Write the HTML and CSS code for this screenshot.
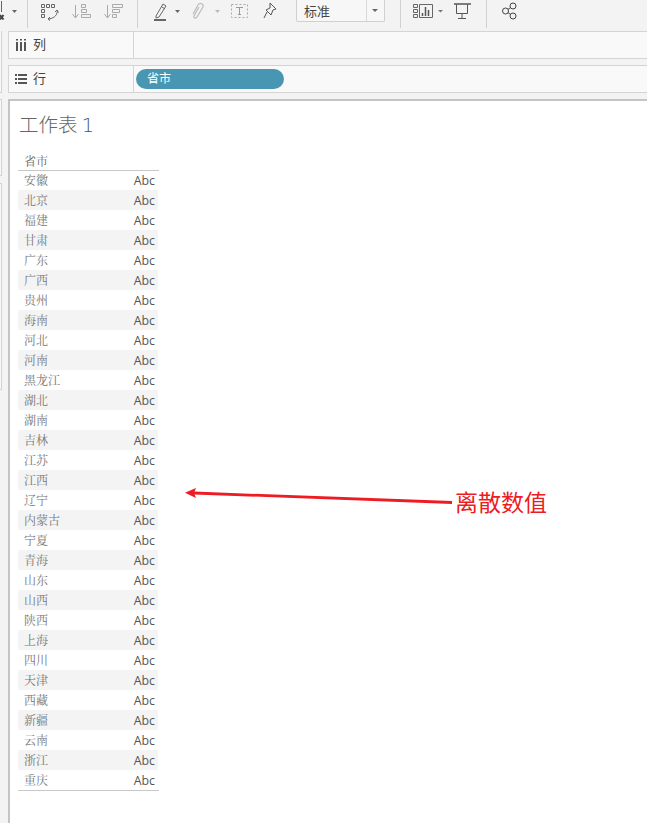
FILE: index.html
```html
<!DOCTYPE html>
<html lang="zh">
<head>
<meta charset="utf-8">
<title>工作表 1</title>
<link rel="stylesheet" href="styles.css">
</head>
<body>
<div class="toolbar">
  <svg class="tools" width="647" height="31" viewBox="0 0 647 31" fill="none">
    <g stroke="#444"><path d="M0 15l3.500 4.500M0 19.500L3.500 15" stroke-width="2"/><path d="M1.500 1v11" stroke-width="1" stroke="#666"/></g>
    <path d="M12 10h5l-2.500 3z" fill="#666"/>
    <path d="M27.500 0v28M137.500 0v28M400.500 0v28M486.500 0v28" stroke="#d0d0d0"/>
    <g stroke="#666"><path d="M41.500 4.500h3v3h-3zM46.500 4.500h3v3h-3zM51.500 4.500h3v3h-3zM41.500 9.500h3v3h-3zM41.500 14.500h3v3h-3z"/><path d="M57 10c1 4-2 8-8 9"/><path d="M55 12l2-2 1.500 2.500M50 17l-2 2 2 1.500"/></g>
    <g stroke="#aaa"><path d="M75.500 5v12M72.500 14l3 4 3-4"/><path d="M81.500 4.500h4v3h-4zM81.500 9.500h5v3h-5zM81.500 14.500h9v3h-9z"/></g>
    <g stroke="#aaa"><path d="M107.500 5v12M104.500 14l3 4 3-4"/><path d="M112.500 4.500h10v3h-10zM112.500 9.500h7v3h-7zM112.500 14.500h4v3h-4z"/></g>
    <path d="M156 16l7-12 3 2-7 11-3 1zM162 7l3 2" stroke="#666"/><path d="M154 20h12" stroke="#666" stroke-width="2"/>
    <path d="M175 10h5l-2.500 3z" fill="#666"/>
    <path d="M193 14l5-9c2-3 6-1 5 2l-6 10c-1 2-4 1-3-1l5-9" stroke="#bbb" stroke-width="1.200"/>
    <path d="M215 10h5l-2.500 3z" fill="#bbb"/>
    <path d="M231.500 4.500h16v13h-16z" stroke="#aaa" stroke-dasharray="2 2"/><path d="M236 7.500h7M239.500 7.500v7M238 14.500h3" stroke="#999"/>
    <path d="M270 3l6 6-3 1-2 5-5-5 4-2zM267 12l-3 6" stroke="#555"/>
    <path d="M372 10h6l-3 3z" fill="#666"/>
    <path d="M413.500 4.500h4v3h-4zM413.500 9.500h4v3h-4zM413.500 14.500h4v3h-4zM419.500 4.500h13v13h-13z" stroke="#666"/>
    <path d="M422.500 16v-3M425.500 16V7M428.500 16v-6" stroke="#555" stroke-width="1.500"/>
    <path d="M438 10h5l-2.500 2.500z" fill="#777"/>
    <path d="M456.500 4.500v9h11v-9M462 13.500v5M458 18.500h8" stroke="#555"/><path d="M454 4h17" stroke="#555" stroke-width="1.500"/>
    <circle cx="513" cy="6" r="3" stroke="#444"/><circle cx="505.500" cy="11" r="3" stroke="#444"/><circle cx="513" cy="16" r="3" stroke="#444"/><path d="M508 9.400l2.500-1.800M508 12.600l2.500 1.800" stroke="#444"/>
  </svg>
  <div class="select"><span class="select-text">标准</span><span class="select-arrow"></span></div>
</div>
<div class="main">
  <div class="rail">
    <div class="rail-panel rail-a"></div>
    <div class="rail-panel rail-b"></div>
    <div class="rail-panel rail-c"></div>
  </div>
  <div class="stack">
    <div class="shelf">
      <div class="shelf-label">
        <svg class="shelf-icon" width="12" height="12" viewBox="0 0 12 12"><path d="M1 3h2v9H1zM5 3h2v9H5zM9 3h2v9H9zM1 0h2v1.500H1zM5 0h2v1.500H5zM9 0h2v1.500H9z" fill="#555"/></svg>
        <span class="shelf-name">列</span>
      </div>
      <div class="shelf-body"></div>
    </div>
    <div class="shelf">
      <div class="shelf-label">
        <svg class="shelf-icon" width="12" height="12" viewBox="0 0 12 12"><path d="M0 1h2v2H0zM0 5h2v2H0zM0 9h2v2H0zM3 1h9v2H3zM3 5h9v2H3zM3 9h9v2H3z" fill="#555"/></svg>
        <span class="shelf-name">行</span>
      </div>
      <div class="shelf-body"><div class="pill">省市</div></div>
    </div>
    <div class="canvas">
      <h1 class="title">工作表 <span class="title-num">1</span></h1>
      <div class="table">
        <div class="head">省市</div>
        <div class="row"><span>安徽</span><span class="abc">Abc</span></div>
        <div class="row"><span>北京</span><span class="abc">Abc</span></div>
        <div class="row"><span>福建</span><span class="abc">Abc</span></div>
        <div class="row"><span>甘肃</span><span class="abc">Abc</span></div>
        <div class="row"><span>广东</span><span class="abc">Abc</span></div>
        <div class="row"><span>广西</span><span class="abc">Abc</span></div>
        <div class="row"><span>贵州</span><span class="abc">Abc</span></div>
        <div class="row"><span>海南</span><span class="abc">Abc</span></div>
        <div class="row"><span>河北</span><span class="abc">Abc</span></div>
        <div class="row"><span>河南</span><span class="abc">Abc</span></div>
        <div class="row"><span>黑龙江</span><span class="abc">Abc</span></div>
        <div class="row"><span>湖北</span><span class="abc">Abc</span></div>
        <div class="row"><span>湖南</span><span class="abc">Abc</span></div>
        <div class="row"><span>吉林</span><span class="abc">Abc</span></div>
        <div class="row"><span>江苏</span><span class="abc">Abc</span></div>
        <div class="row"><span>江西</span><span class="abc">Abc</span></div>
        <div class="row"><span>辽宁</span><span class="abc">Abc</span></div>
        <div class="row"><span>内蒙古</span><span class="abc">Abc</span></div>
        <div class="row"><span>宁夏</span><span class="abc">Abc</span></div>
        <div class="row"><span>青海</span><span class="abc">Abc</span></div>
        <div class="row"><span>山东</span><span class="abc">Abc</span></div>
        <div class="row"><span>山西</span><span class="abc">Abc</span></div>
        <div class="row"><span>陕西</span><span class="abc">Abc</span></div>
        <div class="row"><span>上海</span><span class="abc">Abc</span></div>
        <div class="row"><span>四川</span><span class="abc">Abc</span></div>
        <div class="row"><span>天津</span><span class="abc">Abc</span></div>
        <div class="row"><span>西藏</span><span class="abc">Abc</span></div>
        <div class="row"><span>新疆</span><span class="abc">Abc</span></div>
        <div class="row"><span>云南</span><span class="abc">Abc</span></div>
        <div class="row"><span>浙江</span><span class="abc">Abc</span></div>
        <div class="row"><span>重庆</span><span class="abc">Abc</span></div>
      </div>
      <svg class="arrow" width="280" height="24" viewBox="0 0 280 24" fill="none">
        <path d="M10 5L268 14.500" stroke="#ed1c24" stroke-width="2.800"/>
        <path d="M1 4.700l11-4.700-2 5 2 5z" fill="#ed1c24"/>
      </svg>
      <div class="note">离散数值</div>
    </div>
  </div>
</div>
</body>
</html>
```
FILE: styles.css
```css
* { box-sizing: border-box; }
html, body { margin: 0; padding: 0; }
body { width: 647px; height: 823px; overflow: hidden; background: #f3f3f3; font-family: "Noto Sans CJK SC", "Liberation Sans", sans-serif; }
.toolbar { position: relative; height: 31px; }
.tools { position: absolute; left: 0; top: 0; }
.select { position: absolute; left: 296px; top: -4px; width: 89px; height: 26px; display: flex; justify-content: space-between; border: 1px solid #d0d0d0; border-top: 0; border-radius: 0 0 2px 2px; background: #f7f7f7; padding-top: 5px; }
.select-text { padding-left: 7px; font-size: 13px; line-height: 20px; color: #444; }
.select-arrow { width: 18px; border-left: 1px solid #d8d8d8; margin-top: -5px; position: relative; }
.select-arrow::after { content: ""; position: absolute; left: 5px; top: 13px; border: 3px solid transparent; border-top: 3px solid #666; }
.main { display: flex; height: 792px; }
.rail { width: 8px; flex: none; display: flex; flex-direction: column; }
.rail-panel { width: 2px; background: #f8f8f8; border-right: 1px solid #d2d2d2; }
.rail-a { height: 62px; border-bottom: 1px solid #d2d2d2; }
.rail-b { height: 77px; margin-top: 6px; border-top: 1px solid #d2d2d2; border-bottom: 1px solid #d2d2d2; }
.rail-c { height: 207px; margin-top: 7px; border-top: 1px solid #d2d2d2; border-bottom: 1px solid #d2d2d2; }
.stack { flex: 1; display: flex; flex-direction: column; gap: 6px; }
.shelf { display: flex; height: 28px; flex: none; background: #f9f9f9; border: 1px solid #d4d4d4; border-right: 0; }
.shelf-label { width: 125px; flex: none; display: flex; align-items: center; gap: 6px; padding-left: 6px; border-right: 1px solid #d4d4d4; font-size: 13px; color: #444; }
.shelf-icon { flex: none; }
.shelf-name { line-height: 18px; padding-bottom: 2px; }
.shelf-body { flex: 1; display: flex; align-items: center; padding-left: 2px; }
.pill { width: 148px; height: 20px; border-radius: 10px; background: #4996b2; color: #fff; font-size: 12px; line-height: 18px; padding-left: 11px; }
.canvas { position: relative; flex: 1; background: #fff; border-left: 2px solid #c4c4c4; border-top: 2px solid #c4c4c4; padding: 10px 0 0 8px; }
.title { height: 26px; margin: 0 0 0 1px; font-family: "Noto Sans CJK SC", sans-serif; font-weight: 300; font-size: 19.500px; line-height: 26px; color: #666; }
.title-num { font-family: "DejaVu Sans", sans-serif; color: #3f566e; }
.table { width: 141px; margin-top: 14px; border-bottom: 1px solid #c8c8c8; font-family: "Noto Serif CJK SC", "Noto Sans CJK SC", serif; }
.head { height: 20px; border-bottom: 1px solid #c8c8c8; padding-left: 6px; font-size: 12px; line-height: 20px; color: #666; }
.row { display: flex; justify-content: space-between; height: 20px; width: 140px; padding: 0 3px 0 6px; font-size: 12px; line-height: 20px; color: #777; }
.head + .row { height: 19px; line-height: 18px; }
.row:nth-child(odd) { background: #f4f4f4; }
.abc { padding-top: 1px; font-family: "Open Sans", sans-serif; font-size: 12.300px; color: #555; }
.arrow { position: absolute; left: 174px; top: 387px; }
.note { position: absolute; left: 445px; top: 384px; font-size: 23px; line-height: 32px; color: #ed1c24; }
```
